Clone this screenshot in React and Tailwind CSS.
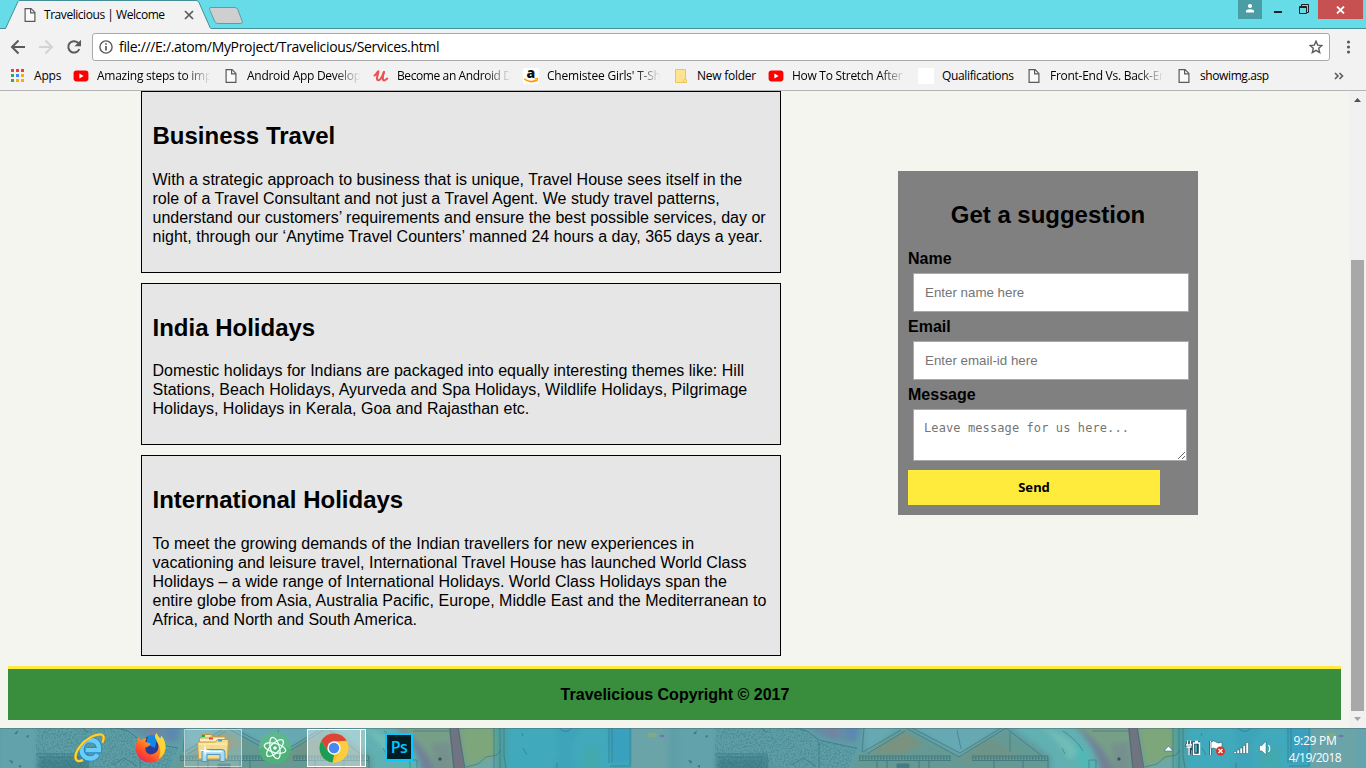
import React from 'react';

const services = [
  {
    title: 'Business Travel',
    box: 'h-[182px]',
    head: 'mb-[20px]',
    lines: [
      'With a strategic approach to business that is unique, Travel House sees itself in the',
      'role of a Travel Consultant and not just a Travel Agent. We study travel patterns,',
      'understand our customers’ requirements and ensure the best possible services, day or',
      'night, through our ‘Anytime Travel Counters’ manned 24 hours a day, 365 days a year.',
    ],
  },
  {
    title: 'India Holidays',
    box: 'h-[162px]',
    head: 'mb-[19px]',
    lines: [
      'Domestic holidays for Indians are packaged into equally interesting themes like: Hill',
      'Stations, Beach Holidays, Ayurveda and Spa Holidays, Wildlife Holidays, Pilgrimage',
      'Holidays, Holidays in Kerala, Goa and Rajasthan etc.',
    ],
  },
  {
    title: 'International Holidays',
    box: 'h-[201px]',
    head: 'mb-[20px]',
    lines: [
      'To meet the growing demands of the Indian travellers for new experiences in',
      'vacationing and leisure travel, International Travel House has launched World Class',
      'Holidays – a wide range of International Holidays. World Class Holidays span the',
      'entire globe from Asia, Australia Pacific, Europe, Middle East and the Mediterranean to',
      'Africa, and North and South America.',
    ],
  },
];

function PageIcon() {
  return (
    <svg width="16" height="16" viewBox="0 0 16 16" className="shrink-0" fill="#fafafa" stroke="#5a5a5a" strokeWidth="1.2">
      <path d="M3.1 1.6h6l3.8 3.8v9H3.1z" />
      <path d="M8.6 1.6v4.3h4.3" fill="none" />
    </svg>
  );
}

function YoutubeIcon() {
  return (
    <svg width="16" height="16" viewBox="0 0 16 16" className="shrink-0">
      <rect x="0.6" y="2.6" width="14.8" height="10.8" rx="2.8" fill="#f00" />
      <path d="M6.4 5.6v4.8L10.6 8z" fill="#fff" />
    </svg>
  );
}

function AppsIcon() {
  const rows = [
    ['#ea4335', '#ea4335', '#ea4335'],
    ['#34a853', '#4285f4', '#fbab08'],
    ['#34a853', '#fbab08', '#fbab08'],
  ];
  return (
    <svg width="16" height="16" viewBox="0 0 16 16" className="shrink-0">
      {rows.map((r, y) => r.map((c, x) => <rect key={x + '-' + y} x={1 + x * 5} y={1 + y * 5} width="3" height="3" fill={c} />))}
    </svg>
  );
}

function UdemyIcon() {
  return (
    <svg width="16" height="16" viewBox="0 0 16 16" className="shrink-0" fill="none" stroke="#ec5252" strokeLinecap="round" strokeLinejoin="round">
      <path d="M1.5 7.5C3 6.5 4 4.5 5.3 3.3C5.8 5.5 3 9 4.2 11.6C6 13.8 9 10 10.8 4.2" strokeWidth="2.1" />
      <path d="M11 4C10 7 9.2 10.5 10.3 12.2C11.5 13 13 11.8 14.2 10.6" strokeWidth="2.1" />
    </svg>
  );
}

function AmazonIcon() {
  return (
    <svg width="16" height="16" viewBox="0 0 16 16" className="shrink-0 overflow-visible">
      <rect width="16" height="16" rx="2" fill="#fff" />
      <text x="3.6" y="9.6" fontSize="14" fontWeight="800" fontFamily="Open Sans, sans-serif" fill="#111">a</text>
      <path d="M1.2 10.8C5 14.5 10.5 14.2 13.6 12" fill="none" stroke="#f90" strokeWidth="1.6" />
      <path d="M11.6 10.8l3-.2-.7 3" fill="none" stroke="#f90" strokeWidth="1.1" />
    </svg>
  );
}

function FolderIcon() {
  return (
    <svg width="16" height="16" viewBox="0 0 16 16" className="shrink-0">
      <path d="M2.5 1.5h10v9.5l1 1v2.5h-11z" fill="#ffe391" stroke="#e8c65a" />
      <path d="M10.5 14.5v-2.5l2-1.5" fill="none" stroke="#e8c65a" />
    </svg>
  );
}

const fade = '[mask-image:linear-gradient(to_right,#000_75%,transparent_97%)]';
const bookmarks = [
  { icon: <AppsIcon />, text: 'Apps', box: 'w-[63px]', label: 'w-[32px] tracking-[-0.2px]' },
  { icon: <YoutubeIcon />, text: 'Amazing steps to imp', box: 'w-[150px]', label: 'w-[117px] tracking-[-0.25px] ' + fade },
  { icon: <PageIcon />, text: 'Android App Develop', box: 'w-[150px]', label: 'w-[117px] tracking-[-0.28px] ' + fade },
  { icon: <UdemyIcon />, text: 'Become an Android D', box: 'w-[150px]', label: 'w-[117px] tracking-[-0.4px] ' + fade },
  { icon: <AmazonIcon />, text: "Chemistee Girls' T-Sh", box: 'w-[150px]', label: 'w-[117px] tracking-[-0.2px] ' + fade },
  { icon: <FolderIcon />, text: 'New folder', box: 'w-[95px]', label: 'w-[64px] tracking-[-0.25px]' },
  { icon: <YoutubeIcon />, text: 'How To Stretch After', box: 'w-[150px]', label: 'w-[117px] tracking-[-0.28px] ' + fade },
  { icon: <span className="size-4 shrink-0 bg-white" />, text: 'Qualifications', box: 'w-[108px]', label: 'w-[78px] tracking-[-0.35px]' },
  { icon: <PageIcon />, text: 'Front-End Vs. Back-En', box: 'w-[150px]', label: 'w-[117px] tracking-[-0.27px] ' + fade },
  { icon: <PageIcon />, text: 'showimg.asp', box: 'w-[110px]', label: 'w-[80px] tracking-[-0.4px]' },
];

function TitleBar() {
  return (
    <div className="relative flex h-[29px] shrink-0 justify-between border-b border-[#438f97] bg-[#66dce8]">
      <svg width="250" height="29" viewBox="0 0 250 29" className="absolute left-0 top-0">
        <path d="M0 28.5H5.5L18 1.5Q18.5 .5 20 .5H196Q198 .5 198.800 2L210.500 28.500" fill="#f2f2f2" stroke="#438f97" />
        <path d="M5.5 29L6.500 28H210l1 1z" fill="#f2f2f2" />
        <path d="M211 7.500h24q2 0 2.800 2l4.500 12q.500 2-1.500 2h-23q-2 0-3-2L209.500 9.500q-.500-2 1.500-2z" fill="#cfcfcf" stroke="#5f9da4" />
      </svg>
      <div className="relative flex h-[29px] items-center pl-[22px]">
        <PageIcon />
        <span className="ml-1.5 w-[122px] whitespace-nowrap text-[12px] tracking-[-0.45px]">Travelicious | Welcome</span>
        <svg width="10" height="10" viewBox="0 0 10 10" className="ml-[18px]" stroke="#5a5a5a" strokeWidth="1.7">
          <path d="M1 1l8 8M9 1l-8 8" />
        </svg>
      </div>
      <div className="flex h-[19px] pr-[3px]">
        <div className="flex w-6 justify-center bg-[#4a9ca5]">
          <svg width="10" height="10" viewBox="0 0 10 10" className="mt-[3px]" fill="#fff">
            <circle cx="5" cy="3" r="2.100" />
            <path d="M1 9.500V8q0-1.700 4-1.700T9 8v1.500z" />
          </svg>
        </div>
        <svg width="56" height="19" viewBox="0 0 56 19" fill="none" stroke="#222">
          <path d="M12 12h8" strokeWidth="2" />
          <path d="M37.500 6.500h7v7h-7zM37 7.500h8M39.500 6V4.500h7v8H45" />
        </svg>
        <div className="flex w-[45px] items-center justify-center bg-[#c75050]">
          <svg width="9" height="8" viewBox="0 0 9 8" stroke="#fff" strokeWidth="1.8">
            <path d="M1 .5l7 7M8 .5l-7 7" />
          </svg>
        </div>
      </div>
    </div>
  );
}

function Toolbar() {
  return (
    <div className="flex h-[35px] shrink-0 items-center pt-px">
      <svg width="92" height="32" viewBox="0 0 92 32" fill="none" strokeWidth="2">
        <path d="M25 16H12.500M18.500 9.500L12 16l6.500 6.500" stroke="#5a5a5a" />
        <path d="M39 16h12.500M45.500 9.500L52 16l-6.500 6.500" stroke="#d3d3d3" />
        <path d="M79.300 18A5.700 5.700 0 1 1 78 11.800L79 13" stroke="#5a5a5a" />
        <path d="M81 8.700v6.500h-6.500z" fill="#5a5a5a" />
      </svg>
      <div className="flex h-7 w-[1238px] items-center rounded-[3px] border border-[#a9a9a9] bg-white pl-1.5 pr-[6px]">
        <svg width="14" height="14" viewBox="0 0 14 14" fill="none" stroke="#5a5a5a" strokeWidth="1.400">
          <circle cx="7" cy="7" r="6.100" />
          <path d="M7 6v4.500M7 3.200v1.600" strokeWidth="1.700" />
        </svg>
        <span className="ml-[6px] flex-1 whitespace-nowrap pb-px text-[14px] tracking-[-0.33px]">file:///E:/.atom/MyProject/Travelicious/Services.html</span>
        <svg width="14" height="14" viewBox="0 0 14 14" fill="none" stroke="#5a5a5a" strokeWidth="1.400">
          <path d="M7 1.200l1.700 3.900 4.300.4-3.300 2.800 1 4.200L7 10.300l-3.700 2.200 1-4.200L1 5.500l4.300-.4z" />
        </svg>
      </div>
      <svg width="36" height="16" viewBox="0 0 36 16" fill="#5a5a5a">
        <circle cx="18.500" cy="3" r="1.600" />
        <circle cx="18.500" cy="8" r="1.600" />
        <circle cx="18.500" cy="13" r="1.600" />
      </svg>
    </div>
  );
}

function BookmarkBar() {
  return (
    <div className="flex h-[27px] shrink-0 items-center justify-between border-b border-[#b4b4b4] pb-[5px] pl-[10px] pr-[22px] pt-[3px]">
      <div className="flex">
        {bookmarks.map((b) => (
          <div key={b.text} className={'flex items-center gap-2 ' + b.box}>
            {b.icon}
            <span className={'whitespace-nowrap text-[12px] leading-[16px] ' + b.label}>{b.text}</span>
          </div>
        ))}
      </div>
      <svg width="10" height="8" viewBox="0 0 10 8" fill="none" stroke="#5a5a5a" strokeWidth="1.600">
        <path d="M1 1l3 3-3 3M5.500 1l3 3-3 3" />
      </svg>
    </div>
  );
}

function Scrollbar() {
  return (
    <div className="flex w-[17px] flex-col items-center bg-[#f1f1f1]">
      <svg width="17" height="169" viewBox="0 0 17 169">
        <path d="M5 11l3.500-4L12 11z" fill="#505050" />
      </svg>
      <div className="h-[451px] w-[13px] bg-[#a8a8a8]" />
      <svg width="17" height="17" viewBox="0 0 17 17">
        <path d="M5 6l3.500 4L12 6z" fill="#a3a3a3" />
      </svg>
    </div>
  );
}

function SuggestionForm() {
  return (
    <form className="mt-[80px] flex h-[344px] w-[300px] flex-col bg-[#808080] px-[10px] pt-[30px]">
      <h2 className="h-[48px] text-center text-[24px] font-bold leading-[28px] tracking-[-0.020px]">Get a suggestion</h2>
      <label className="h-[24px] font-bold leading-[19px]">Name</label>
      <input placeholder="Enter name here" className="ml-[5px] h-[39px] w-[276px] border border-[#a9a9a9] bg-white px-[11px] text-[13.330px] placeholder:text-[#757575]" />
      <label className="mt-[5px] h-[24px] font-bold leading-[19px]">Email</label>
      <input placeholder="Enter email-id here" className="ml-[5px] h-[39px] w-[276px] border border-[#a9a9a9] bg-white px-[11px] text-[13.330px] placeholder:text-[#757575]" />
      <label className="mt-[5px] h-[24px] font-bold leading-[19px]">Message</label>
      <textarea placeholder="Leave message for us here..." className="ml-[5px] h-[52px] w-[274px] border border-[#a9a9a9] bg-white px-[10px] py-[10px] font-['DejaVu_Sans_Mono',monospace] text-[12px] leading-[16px] tracking-[0.1px] placeholder:text-[#757575]" />
      <button type="button" className="mt-[9px] h-[35px] w-[252px] bg-[#ffeb3b] font-['Noto_Sans',sans-serif] text-[13px] font-bold">Send</button>
    </form>
  );
}

function WebPage() {
  return (
    <div className="flex h-[637px] shrink-0 bg-[#f4f5ef]">
      <main className="w-[1349px] pl-2 font-['Liberation_Sans',Arial,sans-serif] text-[16px] text-black">
        <div className="flex h-[575px] pl-[133px]">
          <div className="flex w-[640px] flex-col gap-[10px]">
            {services.map((s) => (
              <section key={s.title} className={'shrink-0 border border-black bg-[#e6e6e6] px-[10.500px] pt-[30px] ' + s.box}>
                <h2 className={'text-[24px] font-bold leading-[28px] ' + s.head}>{s.title}</h2>
                {s.lines.map((l) => (
                  <p key={l} className="whitespace-nowrap leading-[19px] tracking-[0.012px]">{l}</p>
                ))}
              </section>
            ))}
          </div>
          <div className="ml-[117px]">
            <SuggestionForm />
          </div>
        </div>
        <footer className="flex h-[54px] w-[1333px] items-center justify-center border-t-[3px] border-[#ffeb3b] bg-[#388e3c] pl-px font-bold">
          Travelicious Copyright © 2017
        </footer>
      </main>
      <Scrollbar />
    </div>
  );
}

function WallpaperTile({ x }) {
  return (
    <g transform={`translate(${x} 0)`}>
      <g filter="url(#wash)">
        <path d="M-10-10h260l-60 60H-10z" fill="#5e9fa7" />
        <path d="M0-5h35v50H0z" fill="#62a2ab" />
        <path d="M122-5h60l-5 20-24-3-14-5z" fill="#648da6" />
        <path d="M146-5h14l-3 16-8-3z" fill="#7a7fa0" opacity="0.7" />
        <path d="M166-5h14l-3 17-8-2z" fill="#5586b8" opacity="0.7" />
        <path d="M38 29h50v16H38z" fill="#3d7f8a" opacity="0.8" />
        <path d="M178 27l48-26 55 27 44-27 45 27v17H172z" fill="#659a94" />
        <path d="M190 25l36-21 18 12-20 10z" fill="#7f9078" opacity="0.8" />
        <path d="M268 26l12 4 26-20 10 2 22 16-50 4z" fill="#77917f" opacity="0.6" />
        <path d="M184-5h40l-36 30zM228-5h100l-47 32z" fill="#67a9b3" />
        <path d="M328-5h75l20 50h-50v-16z" fill="#61b0b2" />
        <path d="M362 0q30 5 38 26l-10 6q-10-20-28-32z" fill="#70bdb7" />
        <path d="M396 12q14 12 20 32h-16z" fill="#4ebab6" opacity="0.8" />
        <path d="M392-5h72v50h-40q-6-30-32-50z" fill="#779f88" />
        <path d="M392-4q32 16 44 48h-14q-6-30-30-48z" fill="#728197" />
        <path d="M432 16l18-2 2 30h-16z" fill="#768a92" opacity="0.7" />
        <path d="M462-5h38v30l-22 14h-12z" fill="#7ea67b" />
        <path d="M465 45l10-10 24-8v18z" fill="#6ba8a8" />
        <path d="M494-5h14v50h-12z" fill="#4f9fa0" />
        <path d="M507-5h126v50H507z" fill="#40a9bb" />
        <path d="M555-5h28l-12 24 4 26h-24l8-22z" fill="#3a9fba" opacity="0.5" />
        <path d="M582 20h18v20h-18z" fill="#46aaa8" opacity="0.7" />
        <path d="M608-5h22v40h-18z" fill="#369cbe" opacity="0.7" />
      </g>
      <path d="M632 0h47v40h-47z" fill="#6aa3a8" />
      <ellipse cx="652" cy="7" rx="5" ry="2.500" fill="#82ad7a" opacity="0.8" />
      <ellipse cx="662" cy="8" rx="2.500" ry="1.300" fill="#7275ae" />
      <path d="M449 0h10l6 40h-12z" fill="#6f7480" />
      <path d="M36 0h88l18 12 36 8-8 20H36z" fill="#1e5562" filter="url(#grain)" opacity="0.22" />
      <path d="M14 6l4-4-1 4zM26 8l3-1-1 3zM9 32l4 1-1 3zM18 38l3-1v3z" fill="#2f6f7c" opacity="0.8" />
      <g fill="none" stroke="#2c6878" strokeWidth="1" opacity="0.5">
        <path d="M36 26h52v14M38 29h48M112 37l12-7 13 8M82 0l6 4M116 0l12 3 12 9 32 7 6 1M140 14v26M185 0l-2 24M184 24l38-22M188 26l38-23M227 0l53 29 47-29 36 28M233 0l48 25 41-25M278 2l4 19M331 4v20M384 3q14 9 20 20M383 20l3 6M413 3h36M450 0l4 40M458 0l7 40M466 39l12-3 8-7 11-2 4-5M494 0v40M500 0v40M504 0v28l2 12M559 0q7 7 13 0M609 0v35M612 0v35M630 0v38h-20M523 20l4 7M522 5l1 3M557 35v5M410 32h7v8M410 32v8" />
      </g>
      <g stroke="#2a6472" opacity="0.55">
        <path d="M180 30h92M293 30h76" strokeWidth="3" strokeDasharray="1.500 1.500" />
        <path d="M180 28h92M180 32.500h92M293 28h76v12M293 32.500h76M198 33v7M208 33v7M240 33v7M250 33v7M315 33v7M344 33v7" strokeWidth="1" fill="none" />
        <path d="M218 36h12v4h-12z" fill="#2a6472" />
        <circle cx="440" cy="31" r="1.500" />
      </g>
    </g>
  );
}

function Wallpaper() {
  return (
    <svg width="1366" height="40" viewBox="0 0 1366 40" className="absolute left-0 top-0">
      <defs>
        <filter id="wash" x="-5%" y="-20%" width="110%" height="140%" colorInterpolationFilters="sRGB">
          <feGaussianBlur stdDeviation="2.500" />
        </filter>
        <filter id="grain" x="0" y="0" width="100%" height="100%" colorInterpolationFilters="sRGB">
          <feTurbulence type="fractalNoise" baseFrequency="0.55" numOctaves="2" result="n" />
          <feColorMatrix in="n" type="matrix" values="0 0 0 0 0  0 0 0 0 0  0 0 0 0 0  5 0 0 0 -2.2" result="m" />
          <feComposite in="SourceGraphic" in2="m" operator="in" />
        </filter>
      </defs>
      <rect width="1366" height="40" fill="#5e9fa7" />
      <WallpaperTile x={0} />
      <WallpaperTile x={679} />
      <rect x="1357" width="9" height="40" fill="#64a4ae" />
      <rect width="1366" height="1" fill="#4a6b70" opacity="0.5" />
    </svg>
  );
}

function ExplorerE() {
  return (
    <svg width="32" height="32" viewBox="0 0 32 32" fill="none">
      <path d="M23.500 22.500Q21 26.500 16 26.500Q7.500 26 7.500 17Q8 8.500 16.500 8Q25.500 8.500 25 18.200H12" stroke="#2787c9" strokeWidth="6" />
      <path d="M23.500 22.500Q21 26.500 16 26.500Q7.500 26 7.500 17Q8 8.500 16.500 8Q25.500 8.500 25 18.200H12" stroke="#69cdf5" strokeWidth="4.300" />
      <path d="M8 13Q10 8 17 7" stroke="#c2f0ff" strokeWidth="1.500" />
      <path d="M28.500 10.500Q31.500 3.500 27 2.500Q20 1.500 10 10Q1 19 1.500 26Q2.500 31 9 28" stroke="#c7900e" strokeWidth="3" />
      <path d="M28.500 10.500Q31.500 3.500 27 2.500Q20 1.500 10 10Q1 19 1.500 26Q2.500 31 9 28" stroke="#ffd435" strokeWidth="2" />
    </svg>
  );
}

function Firefox() {
  return (
    <svg width="32" height="32" viewBox="0 0 32 32">
      <defs>
        <linearGradient id="fire" x1="0.900" y1="0" x2="0.200" y2="1">
          <stop offset="0" stopColor="#fff04a" />
          <stop offset="0.400" stopColor="#ff9a1f" />
          <stop offset="0.750" stopColor="#ff4a2c" />
          <stop offset="1" stopColor="#e8215b" />
        </linearGradient>
      </defs>
      <circle cx="16" cy="14" r="10" fill="#2a3b9b" />
      <path d="M13 4q6-3 9 2l-2 10-9-4z" fill="#1388e2" />
      <path d="M3.500 5q1 2 3 3 2-2 5-2-1 2-1 4l5 1.500q-1 3-5 4-1 6 5 7 8-1 8-8 0-5-3-8Q19 4 21.500 1q1 3 4 6 0-2 1-3 4 5 4 12-1 11-11 14-9 2-15-4Q-1 20 1.500 11 2 7 3.500 5z" fill="url(#fire)" />
      <path d="M21.500 1q1 3 4 6 0-2 1-3 4 5 4 12-1 8-7 11 3-8 1-13-5-6-3-13z" fill="#ffd93a" opacity="0.85" />
    </svg>
  );
}

function Folders() {
  return (
    <svg width="34" height="32" viewBox="0 0 34 32">
      <path d="M5.500 2.500h10l1 2h10v10h-21z" fill="#f5e2a4" stroke="#bb9748" />
      <path d="M6 3h3v2H6z" fill="#27ab3b" />
      <path d="M3.500 6h9l2-1h14.500v12H3.500z" fill="#fbefbd" stroke="#c6a254" />
      <path d="M13 5.500h4v2h-4z" fill="#e0452f" />
      <path d="M1.500 10h18l2-2.500h11L31.500 27H2.500z" fill="#f4dc8f" stroke="#c19a48" />
      <path d="M3 12h28" stroke="#fff2c0" />
      <path d="M22 7.500h4v2h-4z" fill="#3a9bdc" />
      <path d="M6 29.500V20.500q0-3 3-3h17q3 0 3 3v9h-5v-7H11v7z" fill="#a8dbef" stroke="#5297be" />
      <path d="M9 19.500h17" stroke="#f0fbff" strokeWidth="1.500" fill="none" />
      <path d="M9 12l.9 5.500 5.100.9-5.100.9L9 25l-.9-5.700L3 18.400l5.100-.9z" fill="#fff" />
    </svg>
  );
}

function Atom() {
  return (
    <svg width="32" height="32" viewBox="0 0 32 32">
      <circle cx="16" cy="16" r="16" fill="#5cb88a" />
      <path d="M0 17a16 16 0 0 0 32 0q-17-8-32 0z" fill="#47aa72" opacity="0.6" />
      <g fill="none" stroke="#e9fff1" strokeWidth="1.300">
        <ellipse cx="16" cy="16" rx="11" ry="4.500" transform="rotate(15 16 16)" />
        <ellipse cx="16" cy="16" rx="11" ry="4.500" transform="rotate(75 16 16)" />
        <ellipse cx="16" cy="16" rx="11" ry="4.500" transform="rotate(135 16 16)" />
      </g>
      <circle cx="16" cy="16" r="1.800" fill="#fff" />
    </svg>
  );
}

function Chrome() {
  return (
    <svg width="30" height="30" viewBox="0 0 30 30">
      <circle cx="15" cy="15" r="14.500" fill="#fbc116" />
      <path d="M2.400 7.800A14.500 14.500 0 0 1 27.600 7.800L15 8.500 9 18.500z" fill="#dc4437" />
      <path d="M2.400 7.800L9 18.600 15 22l-1.500 7.500A14.500 14.500 0 0 1 2.400 7.800z" fill="#199d58" />
      <path d="M13.800 29.500L21 18.500V8.300h6.900q3.500 7.700-.9 14.700-4.700 6.700-13.200 6.500z" fill="#fdcd3f" />
      <circle cx="15" cy="15" r="6.700" fill="#f5f7fa" />
      <circle cx="15" cy="15" r="5.200" fill="#4788f1" />
    </svg>
  );
}

function Tray() {
  return (
    <svg width="110" height="20" viewBox="0 0 110 20">
      <path d="M1 13l4.500-5 4.500 5z" fill="#fff" stroke="#3f7f86" strokeWidth="0.700" />
      <g fill="none" stroke="#214c59" strokeWidth="3">
        <path d="M30.500 5h5v11h-5zM24.500 3v5M27.500 3v5M22.500 7.500h7v3h-3v6" />
        <path d="M47.500 3v14" />
      </g>
      <g fill="none" stroke="#fff" strokeWidth="1.400">
        <path d="M30.500 5h6v11.500h-6zM32 3.500h3M24.500 2.500v4M27.500 2.500v4M23 7h6M23.500 9h5M26 9v8" />
        <path d="M47.500 3v14" />
      </g>
      <path d="M48 4q3-2 5 0t6 0v7q-3 2-6 0t-5 0z" fill="#fff" stroke="#315a62" strokeWidth="0.600" />
      <circle cx="57.500" cy="13" r="4.500" fill="#d93028" />
      <path d="M55.500 11l4 4M59.500 11l-4 4" stroke="#fff" strokeWidth="1.400" />
      <g fill="#fff" stroke="#2b5d6a" strokeWidth="0.500">
        <path d="M71 13.500h2.500v2H71zM74 12h2.500v3.500H74zM77 10h2.500v5.500H77zM80 7.500h2.500v8H80zM83 4.500h2.500v11H83z" />
        <path d="M96.500 7.500h2.500l4-4.500v14l-4-4h-2.500z" />
      </g>
      <path d="M105.500 7q2.500 3.500 0 7" fill="none" stroke="#fff" strokeWidth="1.200" />
    </svg>
  );
}

function Taskbar() {
  return (
    <div className="relative h-10 shrink-0">
      <Wallpaper />
      <div className="relative flex h-10 justify-between">
        <div className="flex items-center">
          <div className="flex w-[110px] justify-center pl-[69px]"><ExplorerE /></div>
          <div className="flex w-[74px] justify-center pl-[8px]"><Firefox /></div>
          <div className="flex h-[38px] w-[58px] items-center justify-center border border-white/50 bg-white/20"><Folders /></div>
          <div className="flex w-[65px] justify-center pl-[1px]"><Atom /></div>
          <div className="flex h-[38px] w-[54px] items-center justify-center border border-white bg-white/40"><Chrome /></div>
          <div className="h-[38px] w-[5px] border-y border-r border-white bg-white/30" />
          <div className="mb-[2px] ml-[19px] flex h-[28px] w-[28px] items-center justify-center border-2 border-[#08c8ff] bg-[#001d26] font-['Open_Sans',sans-serif] text-[16px] font-semibold leading-none text-[#00c8ff]">
            <span className="tracking-[-0.5px]">Ps</span>
          </div>
        </div>
        <div className="flex items-center pr-[24px] text-white">
          <Tray />
          <div className="ml-[15px] w-[54px] whitespace-nowrap text-center text-[12px] leading-[17px] tracking-[-0.5px]">
            <div className="mt-px tracking-[-0.25px]">9:29 PM</div>
            <div>4/19/2018</div>
          </div>
        </div>
      </div>
    </div>
  );
}

export default function App() {
  return (
    <div className="flex h-[768px] w-[1366px] flex-col overflow-hidden bg-[#f2f2f2] font-['Open_Sans','Noto_Sans',sans-serif] text-black">
      <TitleBar />
      <Toolbar />
      <BookmarkBar />
      <WebPage />
      <Taskbar />
    </div>
  );
}
